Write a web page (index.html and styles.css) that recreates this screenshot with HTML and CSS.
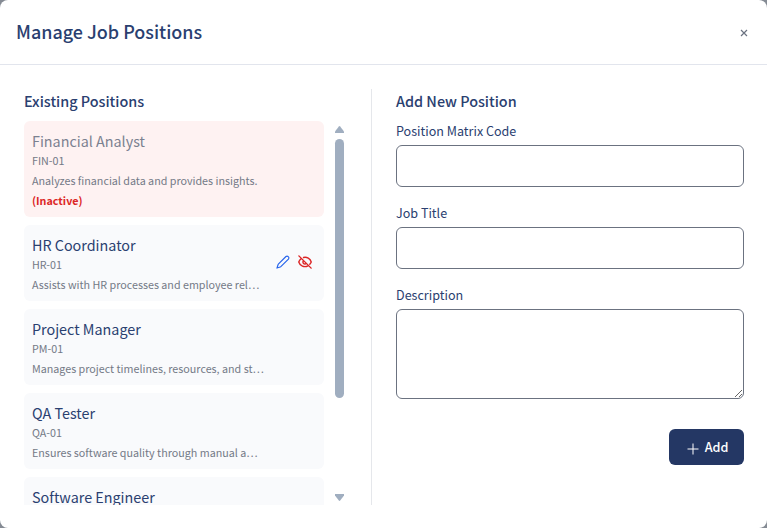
FILE: index.html
```html
<!DOCTYPE html>
<html lang="en">
<head>
<meta charset="utf-8">
<title>Manage Job Positions</title>
<link rel="stylesheet" href="styles.css">
</head>
<body>
<div class="modal">
  <header class="modal-header">
    <h1>Manage Job Positions</h1>
    <button class="close" aria-label="Close"><svg width="8" height="8" viewBox="0 0 8 8" fill="none" stroke="currentColor" stroke-width="1.2"><path d="M1 1l6 6M7 1L1 7"/></svg></button>
  </header>
  <main class="modal-body">
    <section class="existing">
      <h2>Existing Positions</h2>
      <div class="list-wrap">
        <div class="list">
          <article class="card inactive">
            <div class="info">
              <h3>Financial Analyst</h3>
              <p class="code">FIN-01</p>
              <p class="desc">Analyzes financial data and provides insights.</p>
              <p class="status">(Inactive)</p>
            </div>
          </article>
          <article class="card">
            <div class="info">
              <h3>HR Coordinator</h3>
              <p class="code">HR-01</p>
              <p class="desc">Assists with HR processes and employee rel…</p>
            </div>
            <div class="actions">
              <svg class="edit" width="14" height="14" viewBox="0 0 24 24" fill="none" stroke="currentColor" stroke-width="2" stroke-linecap="round" stroke-linejoin="round"><path d="M22 5.5a2.2 2.2 0 0 0-.7-2.3l-.6-.6a2.6 2.6 0 0 0-3.6 0L4.4 15.3a4 4 0 0 0-.9 1.5L1.6 22.4l5.6-1.9a4 4 0 0 0 1.5-.9L21.3 7a3 3 0 0 0 .7-1.5z"/></svg>
              <svg class="hide" width="14" height="14" viewBox="0 0 24 24" fill="none" stroke="currentColor" stroke-width="2.4" stroke-linecap="round" stroke-linejoin="round"><path d="M9.5 4.3A11 11 0 0 1 22.7 12a12 12 0 0 1-2.5 4M5.5 6.2A12 12 0 0 0 1.3 12a11 11 0 0 0 15.7 6.6M14.4 14.4a3.4 3.4 0 1 1-4.8-4.8M1.5 1.5l21 21"/></svg>
            </div>
          </article>
          <article class="card">
            <div class="info">
              <h3>Project Manager</h3>
              <p class="code">PM-01</p>
              <p class="desc">Manages project timelines, resources, and st…</p>
            </div>
          </article>
          <article class="card">
            <div class="info">
              <h3>QA Tester</h3>
              <p class="code">QA-01</p>
              <p class="desc">Ensures software quality through manual a…</p>
            </div>
          </article>
          <article class="card">
            <div class="info">
              <h3>Software Engineer</h3>
            </div>
          </article>
        </div>
        <div class="scrollbar">
          <svg width="9" height="7" viewBox="0 0 9 7" fill="currentColor"><path d="M3.8.4a1 1 0 0 1 1.4 0L9 5.4V7H0V5.4z"/></svg>
          <div class="thumb"></div>
          <svg class="down" width="9" height="7" viewBox="0 0 9 7" fill="currentColor"><path d="M0 0h9v1.6L5.2 6.6a1 1 0 0 1-1.4 0L0 1.6z"/></svg>
        </div>
      </div>
    </section>
    <section class="add">
      <h2>Add New Position</h2>
      <form>
        <label for="code">Position Matrix Code</label>
        <input id="code" type="text">
        <label for="title">Job Title</label>
        <input id="title" type="text">
        <label for="description">Description</label>
        <textarea id="description"></textarea>
        <button class="submit" type="button"><svg width="12" height="12" viewBox="0 0 12 12" stroke="currentColor" fill="none"><path d="M6 .5v11M.5 6h11"/></svg><span>Add</span></button>
      </form>
    </section>
  </main>
</div>
</body>
</html>
```
FILE: styles.css
```css
* { box-sizing: border-box; }
body {
  margin: 0;
  background: #858b94;
  font-family: "Noto Sans CJK SC", "Open Sans", sans-serif;
  color: #2a4070;
}
h1, h2, h3, p { margin: 0; }
.modal {
  width: 767px;
  height: 528px;
  display: flex;
  flex-direction: column;
  background: #fff;
  border-radius: 8px;
  overflow: hidden;
}
.modal-header {
  height: 65px;
  flex: none;
  display: flex;
  align-items: center;
  justify-content: space-between;
  padding: 0 19px 0 16px;
  border-bottom: 1px solid #e2e5ed;
}
h1 { font-size: 17.95px; line-height: 28px; font-weight: 500; padding-bottom: 2px; }
.close {
  display: flex;
  margin-top: 1px;
  padding: 0;
  border: 0;
  background: none;
  color: #6b7280;
}
.modal-body {
  flex: 1;
  min-height: 0;
  display: flex;
  padding: 24px 23px 23px 24px;
}
h2 { font-size: 14.4px; line-height: 24px; font-weight: 500; }
.existing {
  width: 348px;
  flex: none;
  display: flex;
  flex-direction: column;
  gap: 8px;
  border-right: 1px solid #e5e7eb;
}
.list-wrap { flex: 1; min-height: 0; display: flex; gap: 11px; }
.list {
  width: 300px;
  display: flex;
  flex-direction: column;
  gap: 8px;
  overflow: hidden;
}
.card {
  flex: none;
  display: flex;
  align-items: center;
  justify-content: space-between;
  padding: 8px 12px 8px 8px;
  border-radius: 6px;
  background: #f9fafc;
}
.card.inactive { background: #fef2f2; }
.card.inactive h3 { color: #7b8190; }
h3 { font-size: 14.35px; line-height: 24px; font-weight: 400; }
.info { white-space: nowrap; }
.code, .desc, .status {
  font-size: 10.74px;
  line-height: 16px;
  color: #737986;
}
.desc, .status { margin-top: 4px; }
.status { color: #dc2626; font-weight: 700; }
.actions { display: flex; gap: 8px; margin-top: -2px; }
.edit { color: #2563eb; }
.hide { color: #dc2626; }
.scrollbar {
  width: 9px;
  display: flex;
  flex-direction: column;
  padding: 5px 0 4px;
  color: #a0aec0;
}
.scrollbar svg { display: block; flex: none; }
.thumb {
  height: 259px;
  margin-top: 6px;
  border-radius: 5px;
  background: #a0aec0;
}
.down { margin-top: auto; }
.add { flex: 1; padding-left: 24px; }
form { display: flex; flex-direction: column; padding-top: 8px; }
label { font-size: 12.55px; line-height: 20px; margin-bottom: 4px; }
input, textarea {
  width: 100%;
  height: 42px;
  margin: 0 0 16px;
  border: 1px solid #6b7280;
  border-radius: 6px;
  background: #fff;
}
textarea { height: 90px; margin-bottom: 30px; }
.submit {
  align-self: flex-end;
  display: flex;
  align-items: center;
  justify-content: center;
  gap: 6px;
  width: 75px;
  height: 36px;
  padding: 0 0 0 2px;
  border: 0;
  border-radius: 6px;
  background: #243764;
  color: #fff;
  font: 500 12.6px/20px "Noto Sans CJK SC", sans-serif;
}
.submit svg { margin-top: 3px; }
```
